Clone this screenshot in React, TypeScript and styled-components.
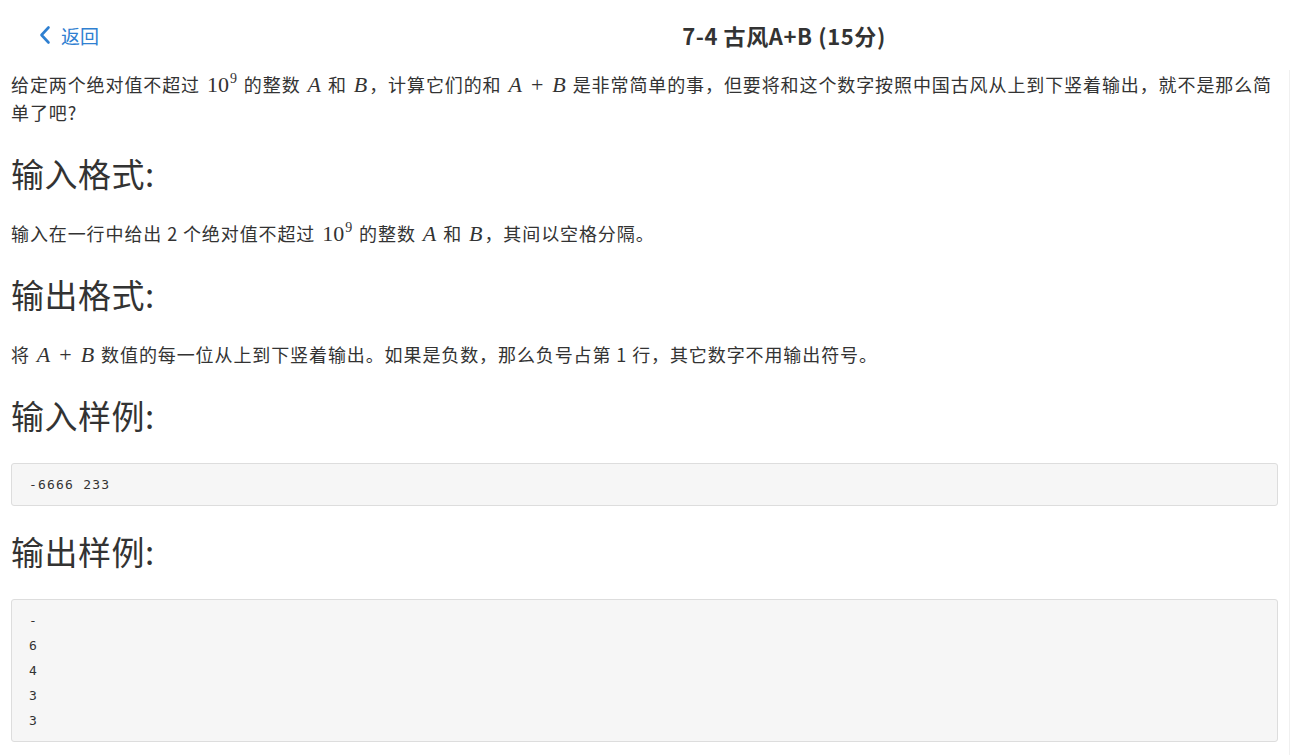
import React from "react";
import styled, { createGlobalStyle } from "styled-components";

const Global = createGlobalStyle`
  html, body { margin: 0; padding: 0; background: #fff; }
  body {
    font-family: "Noto Sans CJK SC", "Noto Sans", sans-serif;
    color: #333;
  }
`;

const Page = styled.div`
  width: 1293px;
  height: 755px;
  overflow: hidden;
  display: flex;
  flex-direction: column;
`;

const Header = styled.header`
  height: 70px;
  display: grid;
  grid-template-columns: 275px 1fr;
  align-items: center;
  flex-shrink: 0;
`;

const Back = styled.a`
  display: flex;
  align-items: center;
  gap: 9px;
  padding-left: 38px;
  color: #2f80d1;
  font-size: 19px;
  text-decoration: none;
  cursor: pointer;
`;

const Title = styled.h1`
  margin: 0;
  text-align: center;
  font-size: 22px;
  letter-spacing: 0.6px;
  font-weight: 700;
  color: #333;
`;

const Main = styled.main`
  flex: 1;
  margin-right: 3px;
  padding: 0 11px;
  border-right: 1px solid #f0f0f0;
`;

const Para = styled.p`
  margin: 0;
  font-size: 18px;
  line-height: 28px;
  letter-spacing: 0.9px;
`;

const Heading = styled.h2`
  margin: 27px 0 26px;
  font-size: 33px;
  line-height: 40px;
  font-weight: 400;
  letter-spacing: 0.5px;
  color: #333;
`;

const M = styled.span<{ $italic?: boolean; $op?: boolean }>`
  font-family: "Liberation Serif", "DejaVu Serif", serif;
  font-style: ${(p) => (p.$italic ? "italic" : "normal")};
  font-size: 22px;
  line-height: 1;
  letter-spacing: 0;
  margin: ${(p) => (p.$op ? "0 7px" : "0 2px")};
`;

const Sup = styled.sup`
  font-size: 14px;
  vertical-align: 9px;
  line-height: 0;
  margin-left: 1px;
`;

const Code = styled.pre`
  margin: 28px 0 -2px;
  padding: 8px 17px;
  background: #f6f6f6;
  border: 1px solid #dddddd;
  border-radius: 3px;
  font-family: "DejaVu Sans Mono", "Liberation Mono", monospace;
  font-size: 13px;
  line-height: 25px;
  letter-spacing: 1.2px;
  color: #333;
`;

const Chevron = () => (
  <svg width="14" height="20" viewBox="0 0 14 20" fill="none">
    <path d="M10.5 2.5 L3.5 10 L10.5 17.5" stroke="#2f80d1" strokeWidth="2.6" strokeLinecap="round" strokeLinejoin="round" />
  </svg>
);

const Pow = () => (
  <M>
    10<Sup>9</Sup>
  </M>
);

const Sum = () => (
  <>
    <M $italic>A</M>
    <M $op>+</M>
    <M $italic>B</M>
  </>
);

export default function App() {
  return (
    <>
      <Global />
      <Page>
        <Header>
          <Back>
            <Chevron />
            返回
          </Back>
          <Title>7-4 古风A+B (15分)</Title>
        </Header>
        <Main>
          <Para>
            给定两个绝对值不超过 <Pow /> 的整数 <M $italic>A</M> 和 <M $italic>B</M>，计算它们的和 <Sum />{" "}
            是非常简单的事，但要将和这个数字按照中国古风从上到下竖着输出，就不是那么简单了吧?
          </Para>
          <Heading>输入格式:</Heading>
          <Para>
            输入在一行中给出 2 个绝对值不超过 <Pow /> 的整数 <M $italic>A</M> 和 <M $italic>B</M>，其间以空格分隔。
          </Para>
          <Heading>输出格式:</Heading>
          <Para>
            将 <Sum /> 数值的每一位从上到下竖着输出。如果是负数，那么负号占第 1 行，其它数字不用输出符号。
          </Para>
          <Heading>输入样例:</Heading>
          <Code>-6666 233</Code>
          <Heading>输出样例:</Heading>
          <Code>{"-\n6\n4\n3\n3"}</Code>
        </Main>
      </Page>
    </>
  );
}
